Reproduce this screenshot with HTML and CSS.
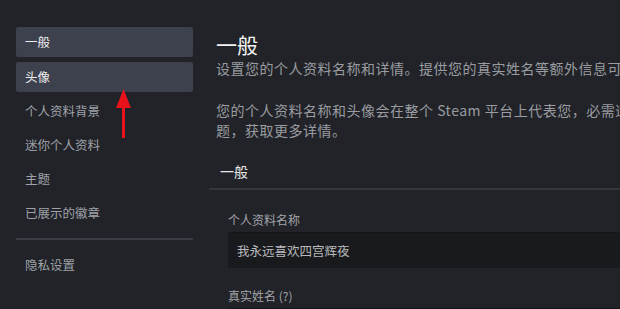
FILE: index.html
```html
<!DOCTYPE html>
<html lang="zh-CN">
<head>
<meta charset="utf-8">
<link rel="stylesheet" href="styles.css">
</head>
<body>
<div class="page">
  <nav class="sidebar">
    <div class="nav-item active">一般</div>
    <div class="nav-item active">头像</div>
    <div class="nav-item">个人资料背景</div>
    <div class="nav-item">迷你个人资料</div>
    <div class="nav-item">主题</div>
    <div class="nav-item">已展示的徽章</div>
    <div class="nav-divider"></div>
    <div class="nav-item">隐私设置</div>
  </nav>
  <main class="main">
    <div class="intro">
      <h1 class="title">一般</h1>
      <p class="desc">设置您的个人资料名称和详情。提供您的真实姓名等额外信息可以帮助朋友在 Steam 社区上找到您。</p>
      <p class="desc gap">您的个人资料名称和头像会在整个 Steam 平台上代表您，必需适合所有受众。请参阅 Steam 在线行为准则和常见问<br>题，获取更多详情。</p>
    </div>
    <div class="section-head">一般</div>
    <div class="field">
      <div class="label">个人资料名称</div>
      <div class="input">我永远喜欢四宫辉夜</div>
    </div>
    <div class="field">
      <div class="label">真实姓名 (?)</div>
      <div class="input"></div>
    </div>
  </main>
</div>
<svg class="arrow" width="20" height="54" viewBox="0 0 20 54">
  <polygon points="9.5,0 17,19 2,19" fill="#e8121a"/>
  <rect x="8" y="17" width="3" height="32" fill="#e8121a"/>
</svg>
</body>
</html>
```
FILE: styles.css
```css
html, body {
  margin: 0;
  padding: 0;
  background: #212328;
  overflow: hidden;
}
body {
  font-family: "Noto Sans CJK SC", "Noto Sans", sans-serif;
  width: 620px;
  height: 309px;
  position: relative;
}
.page {
  display: flex;
  padding: 27px 0 0 16px;
  width: 1200px;
}
.sidebar {
  width: 177px;
  flex: none;
  display: flex;
  flex-direction: column;
  gap: 4px;
}
.nav-item {
  height: 30px;
  line-height: 30px;
  padding-left: 9px;
  font-size: 12.5px;
  color: #9fa2a8;
  border-radius: 2px;
}
.nav-item.active {
  background: #3d404d;
  color: #eeeeee;
}
.nav-item.active + .nav-item.active {
  margin-top: 1px;
}
.nav-divider {
  height: 2px;
  background: #3a3d45;
  margin: 6px 0;
}
.main {
  margin-left: 16px;
  width: 900px;
}
.intro {
  padding: 3px 0 0 7px;
}
.title {
  margin: 0;
  font-size: 21px;
  font-weight: 400;
  line-height: 28px;
  color: #f2f2f2;
}
.desc {
  margin: 0;
  font-size: 14px;
  letter-spacing: 0.5px;
  line-height: 20px;
  color: #9a9ca1;
  white-space: nowrap;
}
.desc.gap {
  margin-top: 22px;
}
.section-head {
  margin-top: 21px;
  padding: 0 0 7px 11px;
  line-height: 20px;
  font-size: 14px;
  color: #e8e8e8;
  border-bottom: 2px solid #33363d;
}
.field {
  padding-left: 19px;
  margin-top: 20px;
}
.field + .field {
  margin-top: 18px;
}
.label {
  font-size: 12px;
  line-height: 20px;
  color: #a3a5aa;
}
.input {
  margin-top: 2px;
  height: 36px;
  line-height: 36px;
  padding-left: 9px;
  background: #191a1e;
  border-top: 1px solid #141518;
  box-sizing: border-box;
  font-size: 12.5px;
  color: #b9babd;
}
.arrow {
  position: absolute;
  left: 114px;
  top: 89px;
}
```
